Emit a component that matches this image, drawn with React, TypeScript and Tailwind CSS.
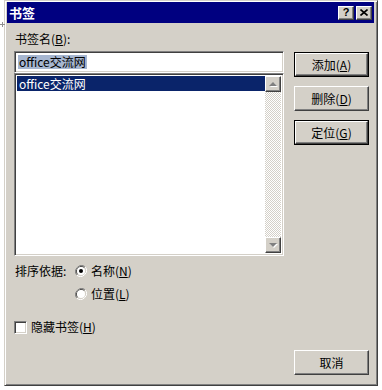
import React from 'react';

const font = { fontFamily: '"Noto Sans CJK SC", "Liberation Sans", sans-serif' };

const raised =
  'border border-t-white border-l-white border-r-[#404040] border-b-[#404040] shadow-[inset_-1px_-1px_#808080] bg-[#d4d0c8]';
const sunken =
  'border border-t-[#808080] border-l-[#808080] border-r-white border-b-white shadow-[inset_1px_1px_#404040,inset_-1px_-1px_#d4d0c8]';

function Key({ k }: { k: string }) {
  return <span className="underline underline-offset-[1px]">{k}</span>;
}

function DialogButton({
  label,
  k,
  isDefault = false,
}: {
  label: string;
  k?: string;
  isDefault?: boolean;
}) {
  const inner = (
    <div className={`${raised} h-full w-full flex items-center justify-center text-[12px] text-black`}>
      {label}
      {k && (
        <>
          (<Key k={k} />)
        </>
      )}
    </div>
  );
  return (
    <div className={`w-[75px] h-[25px] ${isDefault ? 'border border-black' : ''}`}>{inner}</div>
  );
}

function Radio({ checked }: { checked: boolean }) {
  return (
    <svg width="12" height="12" viewBox="0 0 12 12" className="shrink-0">
      <path d="M10.2 1.8 A6 6 0 0 0 1.8 10.2" stroke="#808080" strokeWidth="1" fill="none" />
      <path d="M1.8 10.2 A6 6 0 0 0 10.2 1.8" stroke="#ffffff" strokeWidth="1" fill="none" />
      <path d="M9.5 2.5 A5 5 0 0 0 2.5 9.5" stroke="#404040" strokeWidth="1" fill="none" />
      <path d="M2.5 9.5 A5 5 0 0 0 9.5 2.5" stroke="#d4d0c8" strokeWidth="1" fill="none" />
      <circle cx="6" cy="6" r="4" fill="#ffffff" />
      {checked && <circle cx="6" cy="6" r="2" fill="#000000" />}
    </svg>
  );
}

function ScrollArrow({ up }: { up: boolean }) {
  return (
    <div className={`${raised} w-[16px] h-[16px] flex items-center justify-center shrink-0`}>
      <svg width="9" height="6" viewBox="0 0 9 6">
        {up ? (
          <>
            <polygon points="5,2 9,6 1,6" fill="#ffffff" />
            <polygon points="4,1 8,5 0,5" fill="#808080" />
          </>
        ) : (
          <>
            <polygon points="1,2 9,2 5,6" fill="#ffffff" />
            <polygon points="0,1 8,1 4,5" fill="#808080" />
          </>
        )}
      </svg>
    </div>
  );
}

export default function App() {
  return (
    <div className="relative w-[382px] h-[390px] bg-white overflow-hidden" style={font}>
      <svg width="5" height="5" viewBox="0 0 5 5" className="absolute left-0 top-[22px]">
        <path d="M2.5 0 V5 M0 2.5 H5" stroke="#909090" strokeWidth="1" />
      </svg>
      <div className="ml-[4px] w-[374px] h-[386px] bg-[#d4d0c8] border border-t-[#d4d0c8] border-l-[#d4d0c8] border-r-[#404040] border-b-[#404040] shadow-[inset_1px_1px_#ffffff,inset_-1px_-1px_#808080] pl-[2px] pr-[3px] pt-[1px] flex flex-col">
        {/* title bar */}
        <div className="h-[21px] bg-[#000080] flex items-center pl-[2px] pr-[2px]">
          <span className="text-white font-bold text-[13px] leading-none">书签</span>
          <div className="ml-auto flex gap-[2px]">
            <div className={`${raised} w-[16px] h-[14px] flex items-center justify-center`}>
              <span
                className="text-[11px] font-bold leading-none text-black"
                style={{ fontFamily: '"Liberation Sans", sans-serif' }}
              >
                ?
              </span>
            </div>
            <div className={`${raised} w-[16px] h-[14px] flex items-center justify-center`}>
              <svg width="8" height="7" viewBox="0 0 8 7">
                <path d="M0.5 0.5 L7.5 6.5 M7.5 0.5 L0.5 6.5" stroke="#000" strokeWidth="1.6" />
              </svg>
            </div>
          </div>
        </div>

        {/* body */}
        <div className="flex flex-1 pl-[7px] text-[12px] text-black">
          <div className="w-[270px] flex flex-col">
            <div className="mt-[9px] h-[14px] leading-[14px] pl-[1px]">
              书签名(<Key k="B" />):
            </div>
            <div className={`${sunken} mt-[5px] h-[22px] bg-white flex items-center pl-[3px]`}>
              <span className="bg-[#a6b6d0] leading-[14px] px-[1px]">office交流网</span>
            </div>
            <div className={`${sunken} h-[183px] bg-white flex p-[2px]`}>
              <div className="flex-1 flex flex-col">
                <div className="h-[15px] bg-[#0a246a] text-white leading-[15px] pl-[2px]">office交流网</div>
              </div>
              <div className="w-[16px] flex flex-col">
                <ScrollArrow up />
                <div className="flex-1 bg-[image:repeating-conic-gradient(#d4d0c8_0_25%,#ffffff_0_50%)] bg-[length:2px_2px]" />
                <ScrollArrow up={false} />
              </div>
            </div>
            <div className="mt-[7px] h-[16px] flex items-center pl-[1px]">
              <span className="w-[60px]">排序依据:</span>
              <Radio checked />
              <span className="ml-[4px]">
                名称(<Key k="N" />)
              </span>
            </div>
            <div className="mt-[7px] h-[16px] flex items-center pl-[61px]">
              <Radio checked={false} />
              <span className="ml-[4px]">
                位置(<Key k="L" />)
              </span>
            </div>
            <div className="mt-[17px] h-[16px] flex items-center">
              <div className={`${sunken} w-[13px] h-[13px] bg-white shrink-0`} />
              <span className="ml-[4px]">
                隐藏书签(<Key k="H" />)
              </span>
            </div>
          </div>

          <div className="ml-[10px] flex flex-col pt-[29px]">
            <DialogButton label="添加" k="A" isDefault />
            <div className="mt-[9px]">
              <DialogButton label="删除" k="D" />
            </div>
            <div className="mt-[9px]">
              <DialogButton label="定位" k="G" isDefault />
            </div>
            <div className="mt-[205px]">
              <DialogButton label="取消" />
            </div>
          </div>
        </div>
      </div>
    </div>
  );
}
